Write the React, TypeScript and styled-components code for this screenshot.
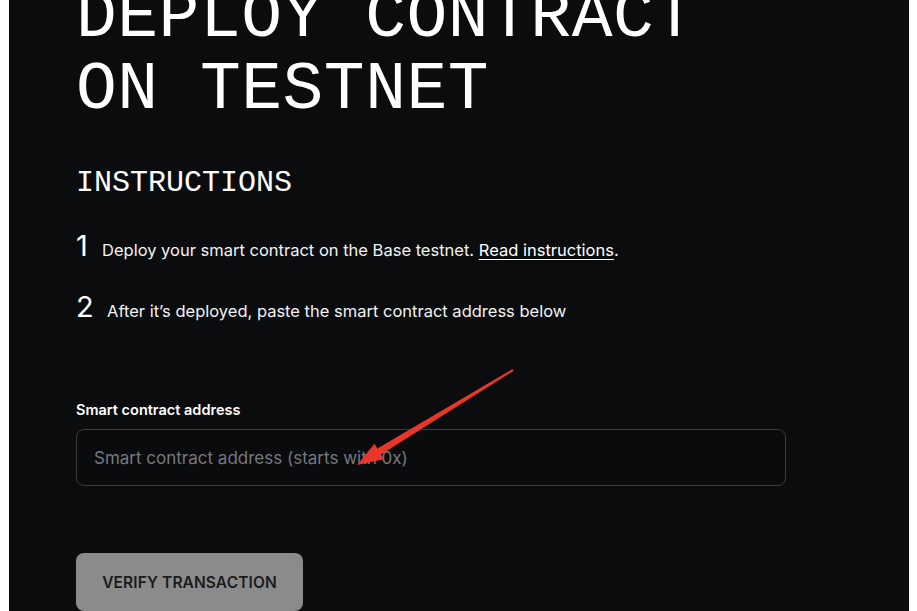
import React from 'react';
import styled, { createGlobalStyle } from 'styled-components';

const GlobalStyle = createGlobalStyle`
  html, body {
    margin: 0;
    padding: 0;
    background: #ffffff;
    overflow: hidden;
  }
`;

const Panel = styled.main`
  position: relative;
  margin: 0 8px 0 9px;
  height: 611px;
  background-color: #0b0c0e;
  color: #ffffff;
  padding-left: 67px;
  overflow: hidden;
  font-family: Inter, 'Noto Sans', sans-serif;
`;

const Title = styled.h1`
  margin: -18px 0 0;
  font-family: 'Liberation Mono', monospace;
  font-weight: 400;
  font-size: 68px;
  line-height: 72px;
  letter-spacing: 0.5px;
`;

const SectionTitle = styled.h2`
  margin: 39px 0 0;
  font-family: 'Liberation Mono', monospace;
  font-weight: 400;
  font-size: 30px;
  line-height: 36px;
`;

const Steps = styled.ol`
  list-style: none;
  margin: 27px 0 0;
  padding: 0;
  display: flex;
  flex-direction: column;
  gap: 25px;
`;

const Step = styled.li`
  display: flex;
  align-items: baseline;
  height: 36px;
`;

const StepNumber = styled.span<{ $gap: number }>`
  font-family: Inter, sans-serif;
  font-size: 29px;
  font-weight: 400;
  width: ${p => p.$gap}px;
  flex-shrink: 0;
`;

const StepText = styled.span`
  font-size: 16.5px;
  color: #f2f2f2;

  a {
    color: #ffffff;
    text-decoration: underline;
    text-underline-offset: 3px;
  }
`;

const Field = styled.div`
  margin-top: 76px;
  width: 710px;
`;

const Label = styled.label`
  display: block;
  font-size: 14.5px;
  font-weight: 600;
  line-height: 18px;
  margin-bottom: 10px;
`;

const Input = styled.input`
  box-sizing: border-box;
  width: 100%;
  height: 57px;
  border: 1px solid #3a3b3e;
  border-radius: 8px;
  background: #0a0b0d;
  padding: 0 17px;
  font-family: Inter, sans-serif;
  font-size: 17px;
  color: #fff;
  outline: none;

  &::placeholder {
    color: #76787d;
  }
`;

const VerifyButton = styled.button`
  margin-top: 67px;
  width: 227px;
  height: 58px;
  border: none;
  border-radius: 8px;
  background: #8b8b8c;
  color: #1a1b1d;
  font-family: Inter, sans-serif;
  font-size: 15.5px;
  font-weight: 600;
  letter-spacing: 0.1px;
`;

const Arrow = styled.svg`
  position: absolute;
  left: 0;
  top: 0;
  pointer-events: none;
`;

export default function App() {
  return (
    <>
      <GlobalStyle />
      <Panel>
        <Title>
          DEPLOY CONTRACT
          <br />
          ON TESTNET
        </Title>
        <SectionTitle>INSTRUCTIONS</SectionTitle>
        <Steps>
          <Step>
            <StepNumber $gap={26}>1</StepNumber>
            <StepText>
              Deploy your smart contract on the Base testnet. <a href="#">Read instructions</a>.
            </StepText>
          </Step>
          <Step>
            <StepNumber $gap={31}>2</StepNumber>
            <StepText>After it’s deployed, paste the smart contract address below</StepText>
          </Step>
        </Steps>
        <Field>
          <Label htmlFor="addr">Smart contract address</Label>
          <Input id="addr" placeholder="Smart contract address (starts with 0x)" />
        </Field>
        <VerifyButton>VERIFY TRANSACTION</VerifyButton>
        {/* red annotation arrow drawn over the page */}
        <Arrow width="900" height="611" viewBox="9 0 900 611">
          <polygon
            points="357,465 374.5,443.8 377.4,448.5 512.5,369.1 513.5,370.9 381,454.5 383.9,459.2"
            fill="#e8362a"
          />
        </Arrow>
      </Panel>
    </>
  );
}
